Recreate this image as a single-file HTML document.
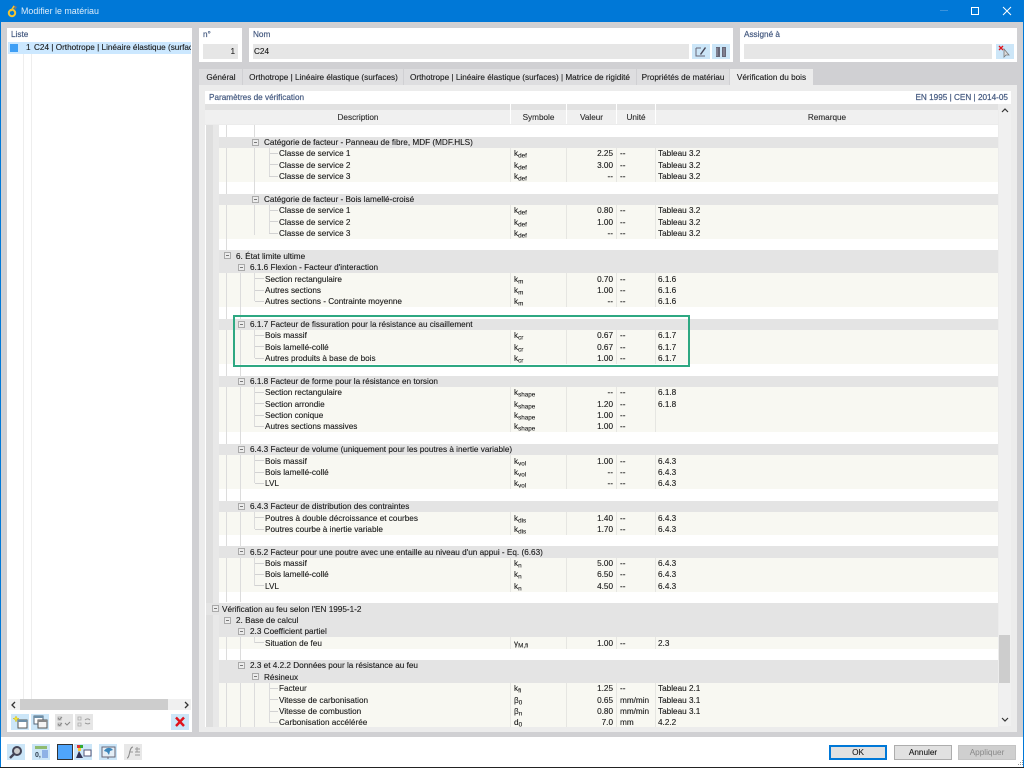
<!DOCTYPE html>
<html lang="fr"><head><meta charset="utf-8"><title>Modifier le matériau</title>
<style>
html,body{margin:0;padding:0}
body{width:1024px;height:768px;overflow:hidden;position:relative;background:#d0d0d3;font:8.2px/11px "Liberation Sans",sans-serif;color:#1a1a1a;-webkit-text-stroke:.12px #1a1a1a}
div,span,svg{position:absolute;box-sizing:border-box;white-space:nowrap}
b{font-weight:normal}
.pan{background:#fff}
.lab{color:#455a80;font-size:8.2px;-webkit-text-stroke:.2px #455a80}
.fld{background:#e6e6e6;height:15px}
.ib{background:#cce6f8;width:18px;height:16px}
.tab{top:69px;height:16px;background:#dedee0;text-align:center;line-height:17px}
.th{top:111px;height:13px;line-height:13px;text-align:center;color:#333}
.r{left:219px;width:779px;height:11.38px;top:calc(136.6px + var(--k)*11.38px);line-height:11.4px}
.b{background:#e4e4e4;z-index:2}
.d{background:#f8f8f2}
.d:before,.d:after{content:"";position:absolute;top:0;height:100%;width:1px;background:#e6e6e2}
.d:before{left:291px}.d:after{left:347px}
.t{position:absolute;top:.4px}
.s{left:295px}.v{left:348px;width:46px;text-align:right}.u{left:401px}.m{left:439px}
.sp1{position:absolute;left:397px;top:0;width:1px;height:100%;background:#e6e6e2}
.sp2{position:absolute;left:436px;top:0;width:1px;height:100%;background:#e6e6e2}
sub{font-size:6.3px;line-height:0;vertical-align:-1.5px}
.x{position:absolute;top:2px;width:7px;height:7px;margin-left:1px;border:1px solid #aaa;background:#ececec;box-sizing:border-box}
.x:after{content:"";position:absolute;left:1px;top:2px;width:3px;height:1px;background:#777}
.c{position:absolute;top:5px;height:1px;background:#d2d2d2}
.vl{width:1px;background:#dcdcdc;z-index:1}
</style></head><body>

<!-- title bar -->
<div style="left:0;top:0;width:1024px;height:22px;background:#0078d7"></div>
<div style="left:0;top:22px;width:1px;height:714px;background:#0078d7"></div>
<div style="left:1023px;top:22px;width:1px;height:714px;background:#0078d7"></div>
<svg style="left:7px;top:4px" width="12" height="14" viewBox="0 0 12 14"><path d="M6 1 L10 3 L8 6 Z" fill="#777"/><circle cx="5" cy="9" r="3.2" fill="none" stroke="#f4c430" stroke-width="2"/><path d="M4 7 L7 2" stroke="#f4c430" stroke-width="1.6"/></svg>
<div style="left:21px;top:5px;color:#dcecf9;-webkit-text-stroke:0;font-size:8.9px;line-height:12px">Modifier le matériau</div>
<div style="left:940px;top:10px;width:8px;height:1px;background:#3a93dd"></div>
<div style="left:971px;top:7px;width:8px;height:8px;border:1px solid #fff"></div>
<svg style="left:1002px;top:6px" width="10" height="10" viewBox="0 0 10 10"><path d="M1 1 L9 9 M9 1 L1 9" stroke="#fff" stroke-width="1"/></svg>

<!-- list panel -->
<div class="pan" style="left:7px;top:28px;width:185px;height:704px"></div>
<div class="lab" style="left:11px;top:29px">Liste</div>
<div style="left:8px;top:42px;width:183px;height:12px;background:#cce8ff"></div>
<div style="left:10px;top:44px;width:8px;height:8px;background:#3f9ff5"></div>
<div style="left:8px;top:42px;width:183px;height:12px;overflow:hidden;line-height:12px"><span style="left:18px;width:4px;text-align:right">1</span><span style="left:26px">C24 | Orthotrope | Linéaire élastique (surfaces)</span></div>
<div style="left:23px;top:54px;width:1px;height:645px;background:#eee"></div>
<div style="left:31px;top:54px;width:1px;height:645px;background:#eee"></div>
<div style="left:8px;top:699px;width:183px;height:11px;background:#f0f0f0"></div>
<div style="left:20px;top:699px;width:148px;height:11px;background:#cdcdcd"></div>
<svg style="left:10px;top:701px" width="8" height="8" viewBox="0 0 8 8"><path d="M5 1 L2 4 L5 7" fill="none" stroke="#333" stroke-width="1.3"/></svg>
<svg style="left:182px;top:701px" width="8" height="8" viewBox="0 0 8 8"><path d="M3 1 L6 4 L3 7" fill="none" stroke="#333" stroke-width="1.3"/></svg>

<div class="ib" style="left:11px;top:714px"><svg width="18" height="16"><rect x="7" y="6" width="9" height="8" fill="#fff" stroke="#555"/><rect x="7" y="6" width="9" height="2" fill="#6d8fa8"/><path d="M5 2 L6 4 L8 4.5 L6 5.5 L5 8 L4 5.5 L2 4.5 L4 4 Z" fill="#f4e23c" stroke="#c9b400" stroke-width=".4"/></svg></div>
<div class="ib" style="left:31px;top:714px"><svg width="18" height="16"><rect x="3" y="2" width="9" height="8" fill="#fff" stroke="#567"/><rect x="3" y="2" width="9" height="2" fill="#6d8fa8"/><rect x="7" y="6" width="9" height="8" fill="#f4f4f4" stroke="#555"/><rect x="7" y="6" width="9" height="2" fill="#888"/></svg></div>
<div style="left:55px;top:714px;width:18px;height:16px;background:#e6e6e6"><svg width="18" height="16"><path d="M3 3h3v3H3zM3 9h3v3H3z" fill="none" stroke="#aaa" stroke-width=".8"/><path d="M3 4l1.500 1.500L7 3M3 10l1.500 1.500L7 9M10 9l2 2 3-3" fill="none" stroke="#888"/></svg></div>
<div style="left:75px;top:714px;width:18px;height:16px;background:#e6e6e6"><svg width="18" height="16"><path d="M3 3h3v3H3zM3 9h3v3H3z" fill="none" stroke="#aaa" stroke-width=".8"/><path d="M10 6c2-2 4-1 5 0M10 9c2 1 4 1 5 0" fill="none" stroke="#999"/></svg></div>
<div class="ib" style="left:171px;top:714px"><svg width="18" height="16"><path d="M5 3.500 L13 12 M13 3.500 L5 12" stroke="#e0141c" stroke-width="2.400"/></svg></div>

<!-- top panels -->
<div class="pan" style="left:199px;top:28px;width:43px;height:34px"></div>
<div class="lab" style="left:203px;top:29px">n°</div>
<div class="fld" style="left:203px;top:44px;width:35px;text-align:right;padding-right:3px;line-height:15px">1</div>
<div class="pan" style="left:249px;top:28px;width:484px;height:34px"></div>
<div class="lab" style="left:253px;top:29px">Nom</div>
<div class="fld" style="left:253px;top:44px;width:436px;padding-left:1px;line-height:15px">C24</div>
<div class="ib" style="left:692px;top:44px;height:15px"><svg width="18" height="15"><path d="M4 4h5M4 4v8h9" fill="none" stroke="#667" stroke-width="1"/><path d="M8 10 L13 3 L14 4 L9 11 Z" fill="#445"/></svg></div>
<div class="ib" style="left:712px;top:44px;height:15px"><svg width="18" height="15"><path d="M4 3h4v10H4zM10 3h4v10h-4z" fill="#667"/><path d="M5 4v8M12 4v8" stroke="#99a"/></svg></div>
<div class="pan" style="left:740px;top:28px;width:277px;height:34px"></div>
<div class="lab" style="left:744px;top:29px">Assigné à</div>
<div class="fld" style="left:744px;top:44px;width:248px"></div>
<div class="ib" style="left:996px;top:44px;height:15px"><svg width="18" height="15"><path d="M8 5 L8 13 L10 11 L13 11 Z" fill="#ddd" stroke="#777" stroke-width=".8"/><path d="M3 2 L7 6 M7 2 L3 6" stroke="#e0141c" stroke-width="1.300"/></svg></div>

<!-- tabs -->
<div class="tab" style="left:199px;width:43px;padding-left:1px">Général</div>
<div class="tab" style="left:243px;width:160px;padding-left:1px">Orthotrope | Linéaire élastique (surfaces)</div>
<div class="tab" style="left:404px;width:232px">Orthotrope | Linéaire élastique (surfaces) | Matrice de rigidité</div>
<div class="tab" style="left:637px;width:92px">Propriétés de matériau</div>
<div class="tab" style="left:730px;width:83px;background:#ececec">Vérification du bois</div>

<!-- content -->
<div style="left:199px;top:85px;width:818px;height:647px;background:#ececec"></div>
<div style="left:205px;top:91px;width:806px;height:13px;background:#fff"></div>
<div class="lab" style="left:209px;top:92px">Paramètres de vérification</div>
<div class="lab" style="left:880px;top:92px;width:128px;text-align:right">EN 1995 | CEN | 2014-05</div>
<div style="left:205px;top:104px;width:793px;height:6px;background:#e2e2e2"></div>
<div style="left:205px;top:110px;width:793px;height:14px;background:#f0f0f0"></div>
<div class="th" style="left:206px;width:304px">Description</div>
<div class="th" style="left:511px;width:55px">Symbole</div>
<div class="th" style="left:567px;width:49px">Valeur</div>
<div class="th" style="left:617px;width:38px">Unité</div>
<div class="th" style="left:656px;width:342px">Remarque</div>
<div style="left:510px;top:104px;width:1px;height:20px;background:#fff"></div>
<div style="left:566px;top:104px;width:1px;height:20px;background:#fff"></div>
<div style="left:616px;top:104px;width:1px;height:20px;background:#fff"></div>
<div style="left:655px;top:104px;width:1px;height:20px;background:#fff"></div>

<!-- scrollbar -->
<div style="left:999px;top:110px;width:12px;height:616px;background:#f0f0f0"></div>
<div style="left:999px;top:635px;width:11px;height:48px;background:#cdcdcd"></div>
<svg style="left:1000px;top:106px" width="10" height="10" viewBox="0 0 10 10"><path d="M2 6 L5 3 L8 6" fill="none" stroke="#333" stroke-width="1.200"/></svg>
<svg style="left:1000px;top:714px" width="10" height="10" viewBox="0 0 10 10"><path d="M2 4 L5 7 L8 4" fill="none" stroke="#333" stroke-width="1.200"/></svg>

<!-- table body -->
<div style="left:205px;top:125px;width:793px;height:602px;background:#fff;overflow:hidden"></div>
<div style="left:206px;top:125px;width:7px;height:602px;background:#dedede"></div>
<div style="left:213px;top:125px;width:6px;height:602px;background:#e8e8e8"></div>
<div style="left:0;top:0;width:1024px;height:727px;overflow:hidden">

<div class="vl" style="left:226px;top:125px;height:131px"></div>
<div class="vl" style="left:254px;top:125px;height:110px"></div>
<div class="vl" style="left:226px;top:262px;height:340px"></div>
<div class="vl" style="left:240px;top:272px;height:330px"></div>
<div class="vl" style="left:226px;top:625px;height:102px"></div>
<div class="vl" style="left:240px;top:636px;height:91px"></div>
<div class="vl" style="left:254px;top:682px;height:45px"></div>
<div class="vl" style="left:269px;top:148px;height:28px"></div>
<div class="vl" style="left:269px;top:205px;height:28px"></div>
<div class="vl" style="left:254px;top:273px;height:28px"></div>
<div class="vl" style="left:254px;top:330px;height:28px"></div>
<div class="vl" style="left:254px;top:387px;height:40px"></div>
<div class="vl" style="left:254px;top:455px;height:28px"></div>
<div class="vl" style="left:254px;top:512px;height:17px"></div>
<div class="vl" style="left:254px;top:557px;height:29px"></div>
<div class="vl" style="left:254px;top:637px;height:6px"></div>
<div class="vl" style="left:269px;top:683px;height:40px"></div>

<div class="r b" style="--k:0"><i class="x" style="left:32px"></i><b class="t" style="left:45px">Catégorie de facteur - Panneau de fibre, MDF (MDF.HLS)</b></div>
<div class="r d" style="--k:1"><i class="c" style="left:50px;width:9px"></i><b class="t" style="left:60px">Classe de service 1</b><b class="t s">k<sub>def</sub></b><b class="t v">2.25</b><i class="sp1"></i><b class="t u">--</b><i class="sp2"></i><b class="t m">Tableau 3.2</b></div>
<div class="r d" style="--k:2"><i class="c" style="left:50px;width:9px"></i><b class="t" style="left:60px">Classe de service 2</b><b class="t s">k<sub>def</sub></b><b class="t v">3.00</b><i class="sp1"></i><b class="t u">--</b><i class="sp2"></i><b class="t m">Tableau 3.2</b></div>
<div class="r d" style="--k:3"><i class="c" style="left:50px;width:9px"></i><b class="t" style="left:60px">Classe de service 3</b><b class="t s">k<sub>def</sub></b><b class="t v">--</b><i class="sp1"></i><b class="t u">--</b><i class="sp2"></i><b class="t m">Tableau 3.2</b></div>

<div class="r b" style="--k:5"><i class="x" style="left:32px"></i><b class="t" style="left:45px">Catégorie de facteur - Bois lamellé-croisé</b></div>
<div class="r d" style="--k:6"><i class="c" style="left:50px;width:9px"></i><b class="t" style="left:60px">Classe de service 1</b><b class="t s">k<sub>def</sub></b><b class="t v">0.80</b><i class="sp1"></i><b class="t u">--</b><i class="sp2"></i><b class="t m">Tableau 3.2</b></div>
<div class="r d" style="--k:7"><i class="c" style="left:50px;width:9px"></i><b class="t" style="left:60px">Classe de service 2</b><b class="t s">k<sub>def</sub></b><b class="t v">1.00</b><i class="sp1"></i><b class="t u">--</b><i class="sp2"></i><b class="t m">Tableau 3.2</b></div>
<div class="r d" style="--k:8"><i class="c" style="left:50px;width:9px"></i><b class="t" style="left:60px">Classe de service 3</b><b class="t s">k<sub>def</sub></b><b class="t v">--</b><i class="sp1"></i><b class="t u">--</b><i class="sp2"></i><b class="t m">Tableau 3.2</b></div>

<div class="r b" style="--k:10"><i class="x" style="left:4px"></i><b class="t" style="left:17px">6. État limite ultime</b></div>
<div class="r b" style="--k:11"><i class="x" style="left:18px"></i><b class="t" style="left:31px">6.1.6 Flexion - Facteur d'interaction</b></div>
<div class="r d" style="--k:12"><i class="c" style="left:36px;width:9px"></i><b class="t" style="left:46px">Section rectangulaire</b><b class="t s">k<sub>m</sub></b><b class="t v">0.70</b><i class="sp1"></i><b class="t u">--</b><i class="sp2"></i><b class="t m">6.1.6</b></div>
<div class="r d" style="--k:13"><i class="c" style="left:36px;width:9px"></i><b class="t" style="left:46px">Autres sections</b><b class="t s">k<sub>m</sub></b><b class="t v">1.00</b><i class="sp1"></i><b class="t u">--</b><i class="sp2"></i><b class="t m">6.1.6</b></div>
<div class="r d" style="--k:14"><i class="c" style="left:36px;width:9px"></i><b class="t" style="left:46px">Autres sections - Contrainte moyenne</b><b class="t s">k<sub>m</sub></b><b class="t v">--</b><i class="sp1"></i><b class="t u">--</b><i class="sp2"></i><b class="t m">6.1.6</b></div>

<div class="r b" style="--k:16"><i class="x" style="left:18px"></i><b class="t" style="left:31px">6.1.7 Facteur de fissuration pour la résistance au cisaillement</b></div>
<div class="r d" style="--k:17"><i class="c" style="left:36px;width:9px"></i><b class="t" style="left:46px">Bois massif</b><b class="t s">k<sub>cr</sub></b><b class="t v">0.67</b><i class="sp1"></i><b class="t u">--</b><i class="sp2"></i><b class="t m">6.1.7</b></div>
<div class="r d" style="--k:18"><i class="c" style="left:36px;width:9px"></i><b class="t" style="left:46px">Bois lamellé-collé</b><b class="t s">k<sub>cr</sub></b><b class="t v">0.67</b><i class="sp1"></i><b class="t u">--</b><i class="sp2"></i><b class="t m">6.1.7</b></div>
<div class="r d" style="--k:19"><i class="c" style="left:36px;width:9px"></i><b class="t" style="left:46px">Autres produits à base de bois</b><b class="t s">k<sub>cr</sub></b><b class="t v">1.00</b><i class="sp1"></i><b class="t u">--</b><i class="sp2"></i><b class="t m">6.1.7</b></div>

<div class="r b" style="--k:21"><i class="x" style="left:18px"></i><b class="t" style="left:31px">6.1.8 Facteur de forme pour la résistance en torsion</b></div>
<div class="r d" style="--k:22"><i class="c" style="left:36px;width:9px"></i><b class="t" style="left:46px">Section rectangulaire</b><b class="t s">k<sub>shape</sub></b><b class="t v">--</b><i class="sp1"></i><b class="t u">--</b><i class="sp2"></i><b class="t m">6.1.8</b></div>
<div class="r d" style="--k:23"><i class="c" style="left:36px;width:9px"></i><b class="t" style="left:46px">Section arrondie</b><b class="t s">k<sub>shape</sub></b><b class="t v">1.20</b><i class="sp1"></i><b class="t u">--</b><i class="sp2"></i><b class="t m">6.1.8</b></div>
<div class="r d" style="--k:24"><i class="c" style="left:36px;width:9px"></i><b class="t" style="left:46px">Section conique</b><b class="t s">k<sub>shape</sub></b><b class="t v">1.00</b><i class="sp1"></i><b class="t u">--</b><i class="sp2"></i></div>
<div class="r d" style="--k:25"><i class="c" style="left:36px;width:9px"></i><b class="t" style="left:46px">Autres sections massives</b><b class="t s">k<sub>shape</sub></b><b class="t v">1.00</b><i class="sp1"></i><b class="t u">--</b><i class="sp2"></i></div>

<div class="r b" style="--k:27"><i class="x" style="left:18px"></i><b class="t" style="left:31px">6.4.3 Facteur de volume (uniquement pour les poutres à inertie variable)</b></div>
<div class="r d" style="--k:28"><i class="c" style="left:36px;width:9px"></i><b class="t" style="left:46px">Bois massif</b><b class="t s">k<sub>vol</sub></b><b class="t v">1.00</b><i class="sp1"></i><b class="t u">--</b><i class="sp2"></i><b class="t m">6.4.3</b></div>
<div class="r d" style="--k:29"><i class="c" style="left:36px;width:9px"></i><b class="t" style="left:46px">Bois lamellé-collé</b><b class="t s">k<sub>vol</sub></b><b class="t v">--</b><i class="sp1"></i><b class="t u">--</b><i class="sp2"></i><b class="t m">6.4.3</b></div>
<div class="r d" style="--k:30"><i class="c" style="left:36px;width:9px"></i><b class="t" style="left:46px">LVL</b><b class="t s">k<sub>vol</sub></b><b class="t v">--</b><i class="sp1"></i><b class="t u">--</b><i class="sp2"></i><b class="t m">6.4.3</b></div>

<div class="r b" style="--k:32"><i class="x" style="left:18px"></i><b class="t" style="left:31px">6.4.3 Facteur de distribution des contraintes</b></div>
<div class="r d" style="--k:33"><i class="c" style="left:36px;width:9px"></i><b class="t" style="left:46px">Poutres à double décroissance et courbes</b><b class="t s">k<sub>dis</sub></b><b class="t v">1.40</b><i class="sp1"></i><b class="t u">--</b><i class="sp2"></i><b class="t m">6.4.3</b></div>
<div class="r d" style="--k:34"><i class="c" style="left:36px;width:9px"></i><b class="t" style="left:46px">Poutres courbe à inertie variable</b><b class="t s">k<sub>dis</sub></b><b class="t v">1.70</b><i class="sp1"></i><b class="t u">--</b><i class="sp2"></i><b class="t m">6.4.3</b></div>

<div class="r b" style="--k:36"><i class="x" style="left:18px"></i><b class="t" style="left:31px">6.5.2 Facteur pour une poutre avec une entaille au niveau d'un appui - Eq. (6.63)</b></div>
<div class="r d" style="--k:37"><i class="c" style="left:36px;width:9px"></i><b class="t" style="left:46px">Bois massif</b><b class="t s">k<sub>n</sub></b><b class="t v">5.00</b><i class="sp1"></i><b class="t u">--</b><i class="sp2"></i><b class="t m">6.4.3</b></div>
<div class="r d" style="--k:38"><i class="c" style="left:36px;width:9px"></i><b class="t" style="left:46px">Bois lamellé-collé</b><b class="t s">k<sub>n</sub></b><b class="t v">6.50</b><i class="sp1"></i><b class="t u">--</b><i class="sp2"></i><b class="t m">6.4.3</b></div>
<div class="r d" style="--k:39"><i class="c" style="left:36px;width:9px"></i><b class="t" style="left:46px">LVL</b><b class="t s">k<sub>n</sub></b><b class="t v">4.50</b><i class="sp1"></i><b class="t u">--</b><i class="sp2"></i><b class="t m">6.4.3</b></div>

<div class="r b" style="--k:41;left:206px;width:792px"><i class="x" style="left:5px"></i><b class="t" style="left:16px">Vérification au feu selon l'EN 1995-1-2</b></div>
<div class="r b" style="--k:42"><i class="x" style="left:4px"></i><b class="t" style="left:17px">2. Base de calcul</b></div>
<div class="r b" style="--k:43"><i class="x" style="left:18px"></i><b class="t" style="left:31px">2.3 Coefficient partiel</b></div>
<div class="r d" style="--k:44"><i class="c" style="left:36px;width:9px"></i><b class="t" style="left:46px">Situation de feu</b><b class="t s">γ<sub>M,fi</sub></b><b class="t v">1.00</b><i class="sp1"></i><b class="t u">--</b><i class="sp2"></i><b class="t m">2.3</b></div>

<div class="r b" style="--k:46"><i class="x" style="left:18px"></i><b class="t" style="left:31px">2.3 et 4.2.2 Données pour la résistance au feu</b></div>
<div class="r b" style="--k:47"><i class="x" style="left:32px"></i><b class="t" style="left:45px">Résineux</b></div>
<div class="r d" style="--k:48"><i class="c" style="left:50px;width:9px"></i><b class="t" style="left:60px">Facteur</b><b class="t s">k<sub>fi</sub></b><b class="t v">1.25</b><i class="sp1"></i><b class="t u">--</b><i class="sp2"></i><b class="t m">Tableau 2.1</b></div>
<div class="r d" style="--k:49"><i class="c" style="left:50px;width:9px"></i><b class="t" style="left:60px">Vitesse de carbonisation</b><b class="t s">β<sub>0</sub></b><b class="t v">0.65</b><i class="sp1"></i><b class="t u">mm/min</b><i class="sp2"></i><b class="t m">Tableau 3.1</b></div>
<div class="r d" style="--k:50"><i class="c" style="left:50px;width:9px"></i><b class="t" style="left:60px">Vitesse de combustion</b><b class="t s">β<sub>n</sub></b><b class="t v">0.80</b><i class="sp1"></i><b class="t u">mm/min</b><i class="sp2"></i><b class="t m">Tableau 3.1</b></div>
<div class="r d" style="--k:51"><i class="c" style="left:50px;width:9px"></i><b class="t" style="left:60px">Carbonisation accélérée</b><b class="t s">d<sub>0</sub></b><b class="t v">7.0</b><i class="sp1"></i><b class="t u">mm</b><i class="sp2"></i><b class="t m">4.2.2</b></div>
</div>

<!-- highlight -->
<div style="left:233px;top:315px;width:457px;height:52px;border:2px solid #2ea882;z-index:5"></div>

<!-- footer -->
<div style="left:1px;top:737px;width:1022px;height:30px;background:#fff"></div>
<div style="left:0;top:736px;width:1px;height:32px;background:#0078d7"></div>
<div style="left:1023px;top:736px;width:1px;height:32px;background:#0078d7"></div>
<div style="left:0;top:767px;width:1024px;height:1px;background:#222"></div>

<div class="ib" style="left:7px;top:744px"><svg width="18" height="16"><circle cx="10" cy="7" r="4" fill="#ccc" stroke="#445" stroke-width="2"/><path d="M7 10 L3 14" stroke="#445" stroke-width="2.400"/></svg></div>
<div class="ib" style="left:32px;top:744px"><svg width="18" height="16"><rect x="3" y="2" width="12" height="3" fill="#8fbb70"/><rect x="10" y="6" width="6" height="8" fill="#8fb2e6"/><text x="3" y="13" font-family="Liberation Sans" font-size="7" font-weight="bold" fill="#345">0,</text></svg></div>
<div style="left:57px;top:744px;width:16px;height:16px;background:#4fa5fb;border:1px solid #333"></div>
<div class="ib" style="left:74px;top:744px"><svg width="18" height="16"><rect x="3" y="1" width="3" height="3" fill="#d33"/><rect x="6" y="1" width="3" height="3" fill="#3a3"/><rect x="4" y="4" width="3" height="3" fill="#fc3"/><path d="M5 7 L2 14 H9 Z" fill="#335"/><rect x="10" y="6" width="7" height="6" fill="#fff" stroke="#557"/></svg></div>
<div class="ib" style="left:99px;top:744px"><svg width="18" height="16"><rect x="3" y="3" width="13" height="10" fill="#e4eef6" stroke="#667"/><path d="M5 7 C7 3 12 3 14 6 L11 7 L10 11 L8 8 Z" fill="#3c87bc"/><path d="M9 13 V15" stroke="#667"/></svg></div>
<div style="left:124px;top:744px;width:18px;height:16px;background:#e8e8e8"><svg width="18" height="16"><path d="M3 14 C6 14 5 3 9 3" fill="none" stroke="#888"/><path d="M5 8h4M11 5h5M11 8h5M11 11h5M13 3v5" stroke="#999"/></svg></div>

<div style="left:829px;top:745px;width:58px;height:15px;background:#e1e1e1;border:2px solid #0078d7;text-align:center;line-height:11px">OK</div>
<div style="left:894px;top:745px;width:58px;height:15px;background:#e1e1e1;border:1px solid #adadad;text-align:center;line-height:13px">Annuler</div>
<div style="left:958px;top:745px;width:58px;height:15px;background:#cfcfcf;border:1px solid #c4c4c4;text-align:center;line-height:13px;color:#888;-webkit-text-stroke:0">Appliquer</div>
<svg style="left:1016px;top:759px" width="7" height="7"><path d="M6 1h1v1H6zM4 3h1v1H4zM6 3h1v1H6zM2 5h1v1H2zM4 5h1v1H4zM6 5h1v1H6z" fill="#999"/></svg>
</body></html>
